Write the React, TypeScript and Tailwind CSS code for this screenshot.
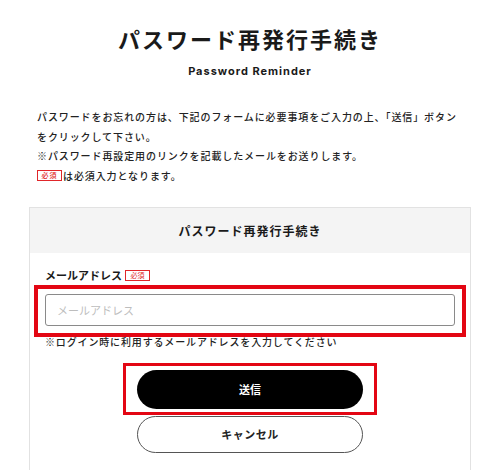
import React from "react";

const jp = "font-['Noto_Sans_CJK_JP',sans-serif]";

function Badge() {
  return (
    <span className="inline-flex h-[11px] w-[25px] items-center justify-center border border-[#e0262a] text-[7px] leading-none text-[#e0262a]">
      必須
    </span>
  );
}

export default function App() {
  return (
    <div className={`${jp} min-h-[470px] bg-white text-[#1a1a1a]`}>
      {/* Page heading */}
      <h1 className="pt-[23px] text-center text-[22px] font-bold leading-[30px] tracking-[2px]">
        パスワード再発行手続き
      </h1>
      <p className="mt-[10px] text-center font-['Inter',sans-serif] text-[11px] font-bold leading-[16px] tracking-[0.09em]">
        Password Reminder
      </p>

      {/* Intro text */}
      <div className="mx-auto mt-[28px] w-[442px] px-[8px] text-[10px] font-medium leading-[19.5px] tracking-[0.9px] text-[#222]">
        <p>
          パスワードをお忘れの方は、下記のフォームに必要事項をご入力の上、「送信」ボタン
          <br />
          をクリックして下さい。
        </p>
        <p>※パスワード再設定用のリンクを記載したメールをお送りします。</p>
        <p className="flex items-center">
          <Badge />
          <span className="ml-[1px]">は必須入力となります。</span>
        </p>
      </div>

      {/* Form card */}
      <div className="mx-auto mt-[22px] w-[442px] border border-[#e2e2e2] pb-[30px]">
        <div className="flex h-[45px] items-center justify-center bg-[#f4f4f4] text-[12px] font-bold tracking-[1px]">
          パスワード再発行手続き
        </div>

        <div className="px-[15px] pt-[14px]">
          <div className="flex h-[16px] items-center gap-[3px]">
            <span className="text-[11px] font-bold leading-[16px]">メールアドレス</span>
            <Badge />
          </div>

          <div className="mx-[-11px] mt-[2px] border-4 border-[#e30613] px-[7px] pb-[7px] pt-[5px]">
            <input
              type="email"
              placeholder="メールアドレス"
              className={`${jp} block h-[32px] w-full rounded-[3px] border-[1.5px] border-[#8a8a8a] bg-white px-[11px] text-[11px] outline-none placeholder:text-[#bdbdbd]`}
            />
          </div>

          <p className="mt-[-2px] text-[10px] font-medium leading-[14px] tracking-[0.85px] text-[#222]">
            ※ログイン時に利用するメールアドレスを入力してください
          </p>

          {/* Actions */}
          <div className="mt-[14px] flex flex-col items-center">
            <div className="border-[3px] border-[#e30613] px-[11px] pb-[3px] pt-[4px]">
              <button className="flex h-[39px] w-[226px] items-center justify-center rounded-full bg-black text-[11px] font-bold text-white">
                送信
              </button>
            </div>
            <button className="mt-[1px] flex h-[37px] w-[226px] items-center justify-center rounded-full border-[1.5px] border-[#555] bg-white text-[11px] font-bold tracking-[0.5px] text-[#222]">
              キャンセル
            </button>
          </div>
        </div>
      </div>
    </div>
  );
}
